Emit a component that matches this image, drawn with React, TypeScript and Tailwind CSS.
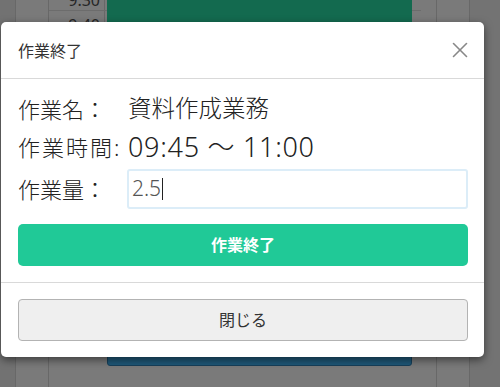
import React from 'react';
import { X } from 'lucide-react';

const times = ['9:30', '9:40', '9:50', '10:00', '10:10', '10:20', '10:30', '10:40', '10:50', '11:00', '11:10', '11:20', '11:30', '12:00'];

function Calendar() {
  return (
    <div className="flex h-[387px] overflow-hidden bg-[#7a7a7a]">
      <div className="w-[16px] border-r border-[#686868] bg-[#727272]" />
      <div className="w-[33px] border-r border-[#686868]" />
      <div className="relative flex w-[372px] flex-col">
        <div className="mt-[-14.5px] flex flex-col">
          {times.map(t => (
            <div key={t} className="flex h-[25.5px] border-b border-[#6c6c6c]">
              <div className="w-[56px] border-r border-[#686868] pt-[6px] pr-[4px] text-right text-[16px] leading-[16px] text-[#262626]">
                {t}
              </div>
            </div>
          ))}
        </div>
        {/* events */}
        <div className="absolute left-[58px] top-0 h-[120px] w-[305px] bg-[#136a4f]" />
        <div className="absolute left-[58px] top-[320px] h-[46px] w-[305px] rounded-b-[3px] border border-[#17405a] bg-[#1f5878]" />
      </div>
      <div className="w-[16px] border-r border-[#686868]" />
      <div className="w-[33px] border-r border-[#686868]" />
      <div className="flex-1 bg-[#737373]" />
    </div>
  );
}

function FinishModal() {
  return (
    <div className="absolute left-[1px] top-[22px] w-[483px] rounded-[5px] bg-white shadow-[0_3px_9px_rgba(0,0,0,0.5)]">
      <div className="flex h-[57px] items-center justify-between border-b border-[#d9d9d9] pl-[17px] pr-[11px]">
        <span className="pt-[1px] text-[16px] text-[#333]">作業終了</span>
        <X size={26} strokeWidth={1.5} className="text-[#888]" />
      </div>
      <div className="px-[17px] pr-[16px] pt-[12px] pb-[16px] font-light text-[#222]">
        <div className="flex h-[36px] items-center">
          <span className="w-[110px] text-[22px]">作業名：</span>
          <span className="text-[23.5px]">資料作成業務</span>
        </div>
        <div className="flex h-[40px] items-center">
          <span className="w-[110px] whitespace-nowrap text-[22px] tracking-[2px]">作業時間:</span>
          <span className="text-[27px] tracking-[0.7px]">09:45 ～ 11:00</span>
        </div>
        <div className="mt-[2px] flex h-[40px] items-center">
          <span className="w-[109px] text-[22px]">作業量：</span>
          <div className="flex h-[40px] flex-1 items-center rounded-[3px] border-2 border-[#dcedf8] px-[3px] text-[21px] text-[#555]">
            2.5<span className="ml-[1px] h-[22px] w-[1px] bg-[#222]" />
          </div>
        </div>
        <button className="mt-[15px] flex h-[42px] w-full items-center justify-center rounded-[5px] bg-[#20c997] text-[16px] font-bold text-white">
          作業終了
        </button>
      </div>
      <div className="border-t border-[#d9d9d9] px-[17px] pr-[16px] pt-[16px] pb-[16px]">
        <button className="flex h-[42px] w-full items-center justify-center rounded-[4px] border border-[#b3b3b3] bg-[#efefef] text-[16px] text-[#333]">
          閉じる
        </button>
      </div>
    </div>
  );
}

export default function App() {
  return (
    <div className="relative h-[387px] w-[500px] overflow-hidden font-['Noto_Sans','Noto_Sans_CJK_JP',sans-serif]">
      <Calendar />
      <FinishModal />
    </div>
  );
}
